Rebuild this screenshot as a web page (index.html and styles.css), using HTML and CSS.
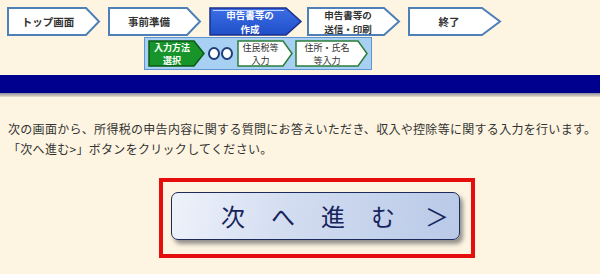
FILE: index.html
```html
<!DOCTYPE html>
<html lang="ja">
<head>
<meta charset="utf-8">
<link rel="stylesheet" href="styles.css">
</head>
<body>
<div class="steps">
  <div class="step">
    <svg class="shape" viewBox="0 0 94 29" preserveAspectRatio="none"><polygon points="1,1 79,1 92,14.5 79,28 1,28" class="p-normal"/></svg>
    <span class="label">トップ画面</span>
  </div>
  <div class="step">
    <svg class="shape" viewBox="0 0 94 29" preserveAspectRatio="none"><polygon points="1,1 79,1 92,14.5 79,28 1,28" class="p-normal"/></svg>
    <span class="label">事前準備</span>
  </div>
  <div class="step current">
    <svg class="shape" viewBox="0 0 94 29" preserveAspectRatio="none"><defs><linearGradient id="bl" x1="0" y1="0" x2="0" y2="1"><stop offset="0" stop-color="#3d6ee6"/><stop offset="1" stop-color="#1f4fc8"/></linearGradient></defs><polygon points="1,1 77,1 92,14.5 77,28 1,28" fill="url(#bl)" stroke="#1a2f8a" stroke-width="1.5"/><line x1="4" y1="3.5" x2="75" y2="3.5" stroke="#bcd4ff" stroke-width="1"/></svg>
    <span class="label light two">申告書等の<br>作成</span>
  </div>
  <div class="step">
    <svg class="shape" viewBox="0 0 94 29" preserveAspectRatio="none"><polygon points="1,1 77,1 92,14.5 77,28 1,28" class="p-normal"/></svg>
    <span class="label two">申告書等の<br>送信・印刷</span>
  </div>
  <div class="step">
    <svg class="shape" viewBox="0 0 94 29" preserveAspectRatio="none"><polygon points="1,1 74,1 92,14.5 74,28 1,28" class="p-normal"/></svg>
    <span class="label">終了</span>
  </div>
</div>

<div class="substeps">
  <div class="sub green">
    <svg class="shape" viewBox="0 0 57 27" preserveAspectRatio="none"><polygon points="1,1 46,1 56,13.5 46,26 1,26" fill="#17952a" stroke="#0b5a16" stroke-width="1.5"/></svg>
    <span class="label light subl">入力方法<br>選択</span>
  </div>
  <div class="dots"><span class="dot"></span><span class="dot"></span></div>
  <div class="sub w1">
    <svg class="shape" viewBox="0 0 56 27" preserveAspectRatio="none"><polygon points="1,1 46,1 55,13.5 46,26 1,26" fill="#ffffff" stroke="#2a7d3a" stroke-width="1.5"/></svg>
    <span class="label thin subl">住民税等<br>入力</span>
  </div>
  <div class="sub w2">
    <svg class="shape" viewBox="0 0 73 27" preserveAspectRatio="none"><polygon points="1,1 63,1 72,13.5 63,26 1,26" fill="#ffffff" stroke="#2a7d3a" stroke-width="1.5"/></svg>
    <span class="label thin subl">住所・氏名<br>等入力</span>
  </div>
</div>

<div class="band"></div>

<div class="intro">
  <p>次の画面から、所得税の申告内容に関する質問にお答えいただき、収入や控除等に関する入力を行います。</p>
  <p>「次へ進む&gt;」ボタンをクリックしてください。</p>
</div>

<div class="btn-wrap">
  <div class="frame">
    <button class="next" type="button">
      <span>次</span><span>へ</span><span>進</span><span>む</span><span>＞</span>
    </button>
  </div>
</div>
</body>
</html>
```

FILE: styles.css
```css
* { box-sizing: border-box; }

body {
  margin: 0;
  width: 600px;
  height: 274px;
  overflow: hidden;
  background: #fdf5e1;
  font-family: "Noto Sans CJK JP", "Noto Sans", sans-serif;
  color: #333333;
}

.steps {
  display: flex;
  gap: 7px;
  padding: 7px 0 0 7px;
  height: 36px;
}

.step {
  position: relative;
  width: 94px;
  height: 29px;
  display: flex;
  align-items: center;
  justify-content: center;
  padding-right: 12px;
}

.step.current { margin-right: -3px; }

.shape {
  position: absolute;
  left: 0;
  top: 0;
  width: 100%;
  height: 100%;
}

.p-normal {
  fill: #ffffff;
  stroke: #4d7fb8;
  stroke-width: 2;
}

.label {
  position: relative;
  font-size: 10.5px;
  line-height: 16px;
  font-weight: bold;
  text-align: center;
  color: #333333;
  white-space: nowrap;
}

.label.two {
  font-size: 9.5px;
  line-height: 14px;
}

.label.subl {
  font-size: 9px;
  line-height: 13px;
}

.label.light { color: #ffffff; }

.label.thin {
  font-weight: normal;
  color: #333333;
}

.substeps {
  display: flex;
  align-items: center;
  margin: 1px 0 0 144px;
  width: 228px;
  height: 33px;
  background: #a7d0f2;
  border: 1px solid #5f93d2;
  padding-left: 3px;
}

.sub {
  position: relative;
  height: 27px;
  display: flex;
  align-items: center;
  justify-content: center;
  padding-right: 9px;
}

.sub.green { width: 57px; }
.sub.w1 { width: 56px; margin-left: 4px; }
.sub.w2 { width: 73px; margin-left: 2px; }

.dots {
  display: flex;
  gap: 1px;
  margin-left: 3px;
}

.dot {
  width: 12px;
  height: 13px;
  border: 2px solid #1d3f7a;
  border-radius: 50%;
  background: #ffffff;
}

.band {
  margin-top: 5px;
  height: 22px;
  background: linear-gradient(#00008f 0, #00008f 18px, #8e8e9a 18px, #b9b7b0 20px, #e6e1d3 22px);
}

.intro {
  padding: 22px 0 0 8px;
  font-size: 12px;
  line-height: 20px;
  color: #333333;
  letter-spacing: 0.3px;
}

.intro p { margin: 0; white-space: nowrap; }

.btn-wrap {
  padding: 19px 0 0 159px;
}

.frame {
  width: 316px;
  height: 80px;
  border: 4px solid #e60d0d;
  padding: 10px 0 0 8px;
}

.next {
  width: 289px;
  height: 48px;
  border: 1.5px solid #1c2a5c;
  border-radius: 7px;
  background: linear-gradient(100deg, #eef2fa 0%, #d3ddf1 40%, #b9c9e7 100%);
  box-shadow: 3px 4px 4px rgba(60, 60, 70, 0.55);
  display: flex;
  align-items: center;
  gap: 26px;
  padding: 0 0 0 49px;
  font-family: "Noto Sans CJK JP", sans-serif;
  font-size: 24px;
  line-height: 1;
  color: #16245e;
}

.next span { display: block; width: 24px; text-align: center; }
.next span:last-child { margin-left: 4px; }
```
